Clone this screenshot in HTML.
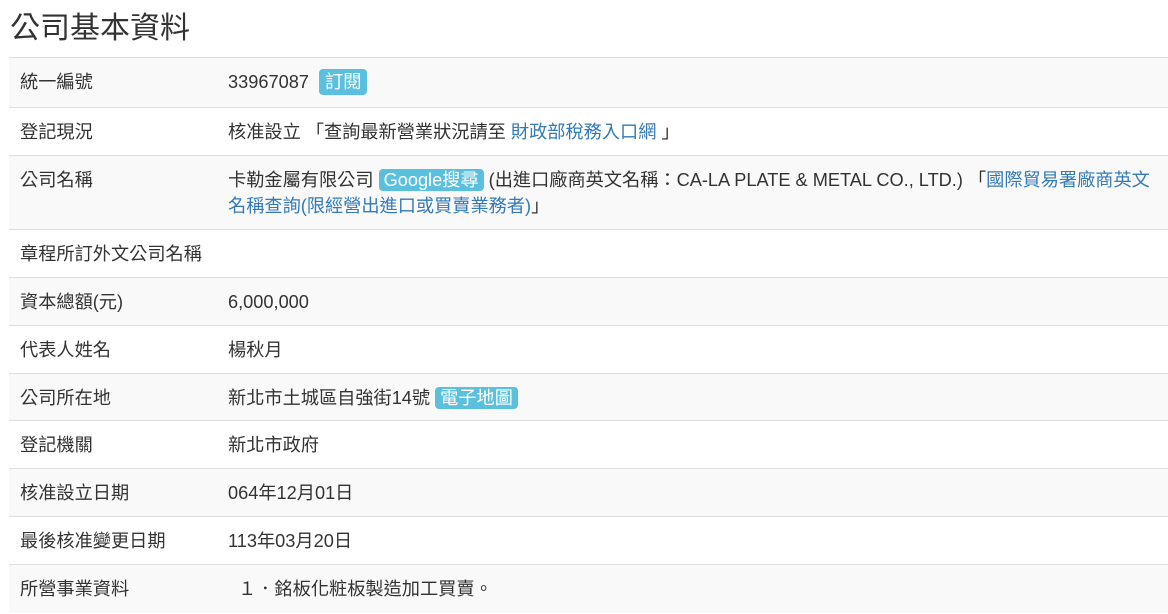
<!DOCTYPE html>
<html><head><meta charset="utf-8"><style>
body{margin:0;background:#fff;font-family:"Liberation Sans","Noto Sans CJK TC",sans-serif;color:#333;width:1168px;height:614px;overflow:hidden}
h3{font-weight:400;font-size:30px;margin:0;position:absolute;left:10px;top:9px;line-height:40px;color:#333}
table{position:absolute;left:9px;top:57px;width:1200px;border-collapse:collapse;font-size:18.2px;line-height:26px}
td{border-top:1px solid #ddd;padding:11px 0 9px 11px;vertical-align:top;white-space:nowrap}
td.l{width:197px}
tr:nth-child(odd){background:#f9f9f9}
a{color:#337ab7;text-decoration:none}
.b{background:#5bc0de;color:#fff;border-radius:4px;padding:1px 5px}
</style></head><body>
<h3>公司基本資料</h3>
<table>
<tr style="height:50px"><td class="l">統一編號</td><td>33967087 &nbsp;<span class="b" style="padding:3px 6px">訂閱</span></td></tr>
<tr style="height:48px"><td class="l">登記現況</td><td>核准設立 「查詢最新營業狀況請至 <a>財政部稅務入口網</a> 」</td></tr>
<tr style="height:74px"><td class="l">公司名稱</td><td style="padding-right:0">卡勒金屬有限公司 <span class="b">Google搜尋</span> (出進口廠商英文名稱：CA-LA PLATE &amp; METAL CO., LTD.) 「<a>國際貿易署廠商英文<br>名稱查詢(限經營出進口或買賣業務者)</a>」</td></tr>
<tr style="height:48px"><td class="l">章程所訂外文公司名稱</td><td></td></tr>
<tr style="height:48px"><td class="l">資本總額(元)</td><td>6,000,000</td></tr>
<tr style="height:48px"><td class="l">代表人姓名</td><td>楊秋月</td></tr>
<tr style="height:47px"><td class="l">公司所在地</td><td>新北市土城區自強街14號 <span class="b">電子地圖</span></td></tr>
<tr style="height:48px"><td class="l">登記機關</td><td>新北市政府</td></tr>
<tr style="height:48px"><td class="l">核准設立日期</td><td>064年12月01日</td></tr>
<tr style="height:48px"><td class="l">最後核准變更日期</td><td>113年03月20日</td></tr>
<tr style="height:48px"><td class="l">所營事業資料</td><td>&nbsp;&nbsp;１．銘板化粧板製造加工買賣。</td></tr>
</table>
</body></html>
